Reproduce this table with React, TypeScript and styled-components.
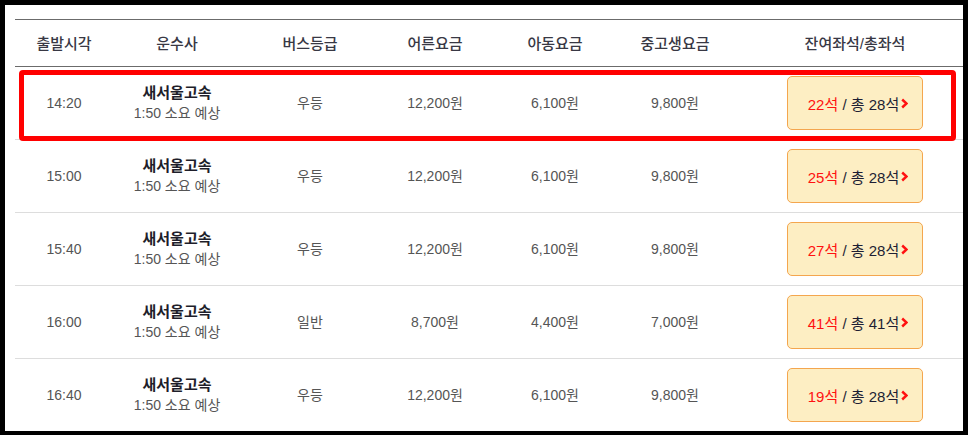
import React from 'react';
import styled, { createGlobalStyle } from 'styled-components';

const GlobalStyle = createGlobalStyle`
  html, body {
    margin: 0;
    padding: 0;
    background: #000000;
  }
  * {
    box-sizing: border-box;
  }
`;

const Frame = styled.div`
  width: 968px;
  height: 435px;
  background: #000000;
  padding: 5px 5px 4px 5px;
`;

const Sheet = styled.div`
  position: relative;
  width: 100%;
  height: 100%;
  background: #ffffff;
  overflow: hidden;
  padding: 14px 0 0 10px;
  font-family: "Liberation Sans", "Noto Sans CJK KR", sans-serif;
`;

const COLUMNS = '98px 128px 138px 112px 128px 112px 248px';

const HeaderRow = styled.div`
  display: grid;
  grid-template-columns: ${COLUMNS};
  height: 48px;
  border-top: 1px solid #6b6b6b;
  border-bottom: 1px solid #6b6b6b;
  width: 1000px;
`;

const HeadCell = styled.div`
  display: flex;
  align-items: center;
  justify-content: center;
  font-size: 15px;
  font-weight: 500;
  color: #383844;
  padding-bottom: 2px;
`;

const Row = styled.div`
  display: grid;
  grid-template-columns: ${COLUMNS};
  height: 73px;
  border-bottom: 1px solid #dddddd;
  width: 1000px;
`;

const Cell = styled.div`
  display: flex;
  flex-direction: column;
  align-items: center;
  justify-content: center;
  font-size: 14px;
  color: #555555;
  line-height: 20px;
`;

const Company = styled.span`
  font-size: 15px;
  font-weight: bold;
  color: #1e1e2a;
`;

const Duration = styled.span`
  color: #555555;
`;

const SeatButton = styled.button`
  width: 136px;
  height: 54px;
  background: #fdeec3;
  border: 1px solid #f4a64e;
  border-radius: 5px;
  display: flex;
  align-items: center;
  justify-content: center;
  gap: 2px;
  padding: 0 0 0 6px;
  font-family: inherit;
  font-size: 15px;
  color: #1e1e34;
  cursor: pointer;
`;

const Remain = styled.span`
  color: #ff1111;
`;

const Highlight = styled.div`
  position: absolute;
  left: 14px;
  top: 65px;
  width: 937px;
  height: 71px;
  border: 5px solid #ff0000;
  border-radius: 4px;
  pointer-events: none;
`;

type Trip = {
  time: string;
  grade: string;
  adult: string;
  child: string;
  student: string;
  left: number;
  total: number;
};

const trips: Trip[] = [
  { time: '14:20', grade: '우등', adult: '12,200원', child: '6,100원', student: '9,800원', left: 22, total: 28 },
  { time: '15:00', grade: '우등', adult: '12,200원', child: '6,100원', student: '9,800원', left: 25, total: 28 },
  { time: '15:40', grade: '우등', adult: '12,200원', child: '6,100원', student: '9,800원', left: 27, total: 28 },
  { time: '16:00', grade: '일반', adult: '8,700원', child: '4,400원', student: '7,000원', left: 41, total: 41 },
  { time: '16:40', grade: '우등', adult: '12,200원', child: '6,100원', student: '9,800원', left: 19, total: 28 },
];

const headers = ['출발시각', '운수사', '버스등급', '어른요금', '아동요금', '중고생요금', '잔여좌석/총좌석'];

const Chevron = () => (
  <svg width="7" height="11" viewBox="0 0 7 11">
    <polyline points="1.2,1.5 5.5,5.5 1.2,9.5" fill="none" stroke="#ff1111" strokeWidth="2.4" />
  </svg>
);

const App: React.FC = () => {
  return (
    <>
      <GlobalStyle />
      <Frame>
        <Sheet>
          <HeaderRow>
            {headers.map((h) => (
              <HeadCell key={h}>{h}</HeadCell>
            ))}
          </HeaderRow>
          {trips.map((t) => (
            <Row key={t.time}>
              <Cell>{t.time}</Cell>
              <Cell>
                <Company>새서울고속</Company>
                <Duration>1:50 소요 예상</Duration>
              </Cell>
              <Cell>{t.grade}</Cell>
              <Cell>{t.adult}</Cell>
              <Cell>{t.child}</Cell>
              <Cell>{t.student}</Cell>
              <Cell>
                <SeatButton>
                  <span>
                    <Remain>{t.left}석</Remain> / 총 {t.total}석
                  </span>
                  <Chevron />
                </SeatButton>
              </Cell>
            </Row>
          ))}
          <Highlight />
        </Sheet>
      </Frame>
    </>
  );
};

export default App;
